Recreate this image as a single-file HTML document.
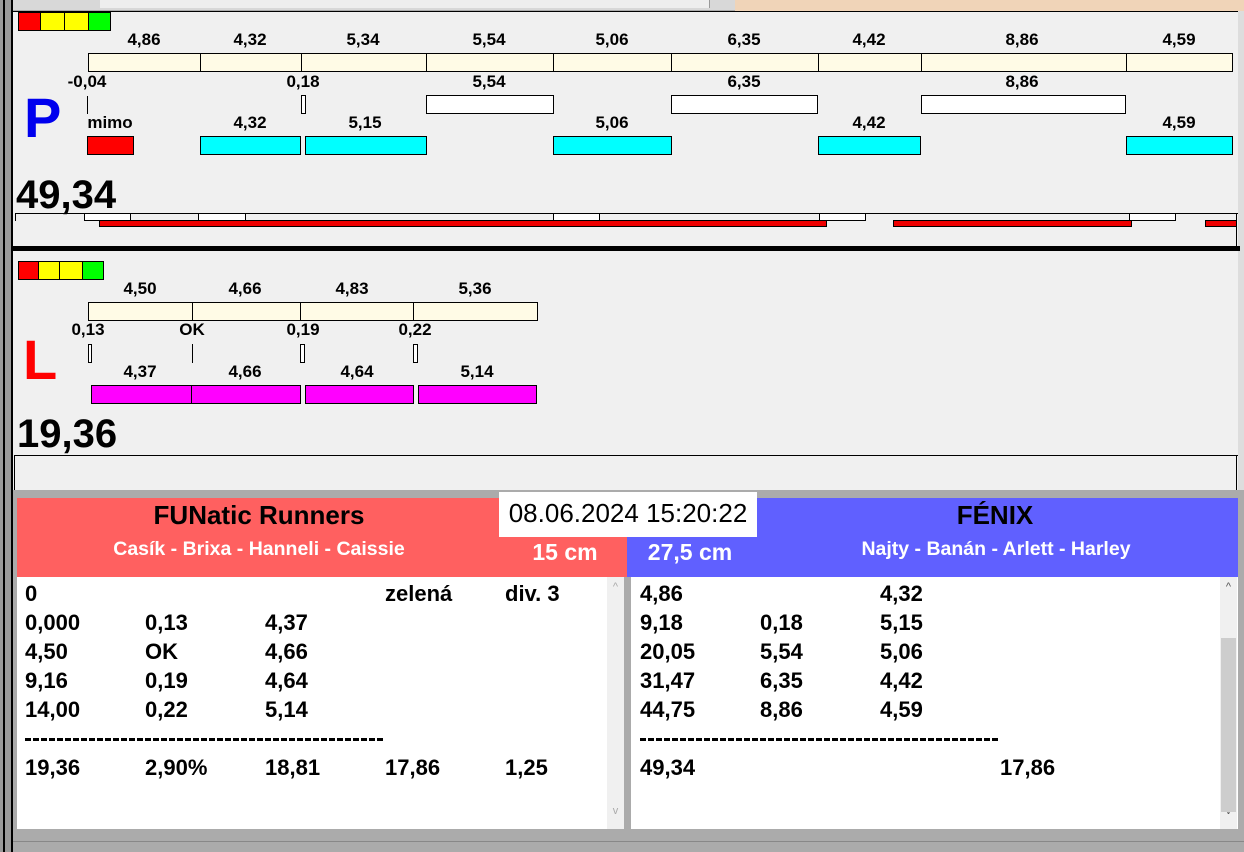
<!DOCTYPE html>
<html><head><meta charset="utf-8"><style>
*{margin:0;padding:0;box-sizing:border-box}
body{width:1244px;height:852px;position:relative;overflow:hidden;background:#ababab;font-family:"Liberation Sans",Arial,sans-serif}
.a{position:absolute}
.b{position:absolute;border:1px solid #000}
.t{position:absolute;font-weight:bold;font-size:16px;color:#000;transform:translateX(-50%);white-space:nowrap;line-height:16px}
.cr{background:#fffbe6}
.cy{background:#00ffff}
.mg{background:#ff00ff}
.w{background:#fff}
.row{position:absolute;font-weight:bold;font-size:22px;line-height:24px;white-space:nowrap}
</style></head><body>
<div class="a" style="left:0;top:0;width:1244px;height:10px;background:#d8d8d8"></div>
<div class="a" style="left:100px;top:0;width:610px;height:8px;background:#eee;border-right:1px solid #999"></div>
<div class="a" style="left:735px;top:0;width:509px;height:11px;background:#f0d4b8"></div>
<div class="a" style="left:0;top:0;width:13px;height:852px;background:#9a9a9a"></div>
<div class="a" style="left:3px;top:0;width:2px;height:852px;background:#000"></div>
<div class="a" style="left:11px;top:0;width:2px;height:852px;background:#000"></div>
<div class="a" style="left:13px;top:11px;width:1227px;height:479px;background:#f0f0f0;border-top:1px solid #000"></div>
<div class="a" style="left:1238px;top:11px;width:6px;height:479px;background:#ddd"></div>
<div class="a" style="left:13px;top:246px;width:1227px;height:5px;background:#000"></div>

<div class="b" style="left:18px;top:12px;width:23px;height:19px;background:#f00"></div>
<div class="b" style="left:40px;top:12px;width:25px;height:19px;background:#ff0"></div>
<div class="b" style="left:64px;top:12px;width:25px;height:19px;background:#ff0"></div>
<div class="b" style="left:88px;top:12px;width:23px;height:19px;background:#0f0"></div>

<div class="t" style="left:144px;top:32px;font-size:17px">4,86</div>
<div class="t" style="left:250px;top:32px;font-size:17px">4,32</div>
<div class="t" style="left:363px;top:32px;font-size:17px">5,34</div>
<div class="t" style="left:489px;top:32px;font-size:17px">5,54</div>
<div class="t" style="left:612px;top:32px;font-size:17px">5,06</div>
<div class="t" style="left:744px;top:32px;font-size:17px">6,35</div>
<div class="t" style="left:869px;top:32px;font-size:17px">4,42</div>
<div class="t" style="left:1022px;top:32px;font-size:17px">8,86</div>
<div class="t" style="left:1179px;top:32px;font-size:17px">4,59</div>
<div class="b cr" style="left:88px;top:53px;width:113px;height:19px"></div>
<div class="b cr" style="left:200px;top:53px;width:102px;height:19px"></div>
<div class="b cr" style="left:301px;top:53px;width:126px;height:19px"></div>
<div class="b cr" style="left:426px;top:53px;width:128px;height:19px"></div>
<div class="b cr" style="left:553px;top:53px;width:119px;height:19px"></div>
<div class="b cr" style="left:671px;top:53px;width:148px;height:19px"></div>
<div class="b cr" style="left:818px;top:53px;width:104px;height:19px"></div>
<div class="b cr" style="left:921px;top:53px;width:206px;height:19px"></div>
<div class="b cr" style="left:1126px;top:53px;width:107px;height:19px"></div>

<div class="t" style="left:87px;top:74px;font-size:17px">-0,04</div>
<div class="t" style="left:303px;top:74px;font-size:17px">0,18</div>
<div class="t" style="left:489px;top:74px;font-size:17px">5,54</div>
<div class="t" style="left:744px;top:74px;font-size:17px">6,35</div>
<div class="t" style="left:1022px;top:74px;font-size:17px">8,86</div>
<div class="a" style="left:87px;top:96px;width:1px;height:18px;background:#000"></div>
<div class="b w" style="left:301px;top:95px;width:5px;height:19px"></div>
<div class="b w" style="left:426px;top:95px;width:128px;height:19px"></div>
<div class="b w" style="left:671px;top:95px;width:147px;height:19px"></div>
<div class="b w" style="left:921px;top:95px;width:205px;height:19px"></div>

<div class="a" style="left:24px;top:88px;font-size:56px;font-weight:bold;color:#0000ee;line-height:60px">P</div>
<div class="t" style="left:110px;top:115px;font-size:17px">mimo</div>
<div class="t" style="left:250px;top:115px;font-size:17px">4,32</div>
<div class="t" style="left:365px;top:115px;font-size:17px">5,15</div>
<div class="t" style="left:612px;top:115px;font-size:17px">5,06</div>
<div class="t" style="left:869px;top:115px;font-size:17px">4,42</div>
<div class="t" style="left:1179px;top:115px;font-size:17px">4,59</div>
<div class="b" style="left:87px;top:136px;width:47px;height:19px;background:#f00"></div>
<div class="b cy" style="left:200px;top:136px;width:101px;height:19px"></div>
<div class="b cy" style="left:305px;top:136px;width:122px;height:19px"></div>
<div class="b cy" style="left:553px;top:136px;width:119px;height:19px"></div>
<div class="b cy" style="left:818px;top:136px;width:103px;height:19px"></div>
<div class="b cy" style="left:1126px;top:136px;width:107px;height:19px"></div>

<div class="a" style="left:16px;top:175px;font-size:40px;font-weight:bold;line-height:40px">49,34</div>
<div class="a" style="left:15px;top:213px;width:1223px;height:1px;background:#000"></div>
<div class="a" style="left:15px;top:213px;width:1px;height:8px;background:#000"></div>
<div class="a" style="left:1236px;top:213px;width:1px;height:33px;background:#000"></div>
<div class="b w" style="left:84px;top:213px;width:47px;height:8px"></div>
<div class="b w" style="left:198px;top:213px;width:48px;height:8px"></div>
<div class="b w" style="left:553px;top:213px;width:47px;height:8px"></div>
<div class="b w" style="left:819px;top:213px;width:47px;height:8px"></div>
<div class="b w" style="left:1129px;top:213px;width:47px;height:8px"></div>
<div class="b" style="left:99px;top:220px;width:728px;height:7px;background:#e00"></div>
<div class="b" style="left:893px;top:220px;width:239px;height:7px;background:#e00"></div>
<div class="b" style="left:1205px;top:220px;width:32px;height:7px;background:#e00"></div>

<div class="b" style="left:18px;top:261px;width:21px;height:19px;background:#f00"></div>
<div class="b" style="left:38px;top:261px;width:22px;height:19px;background:#ff0"></div>
<div class="b" style="left:59px;top:261px;width:24px;height:19px;background:#ff0"></div>
<div class="b" style="left:82px;top:261px;width:22px;height:19px;background:#0f0"></div>
<div class="t" style="left:140px;top:281px;font-size:17px">4,50</div>
<div class="t" style="left:245px;top:281px;font-size:17px">4,66</div>
<div class="t" style="left:352px;top:281px;font-size:17px">4,83</div>
<div class="t" style="left:475px;top:281px;font-size:17px">5,36</div>
<div class="b cr" style="left:88px;top:302px;width:105px;height:19px"></div>
<div class="b cr" style="left:192px;top:302px;width:109px;height:19px"></div>
<div class="b cr" style="left:300px;top:302px;width:114px;height:19px"></div>
<div class="b cr" style="left:413px;top:302px;width:125px;height:19px"></div>
<div class="t" style="left:88px;top:322px;font-size:17px">0,13</div>
<div class="t" style="left:192px;top:322px;font-size:17px">OK</div>
<div class="t" style="left:303px;top:322px;font-size:17px">0,19</div>
<div class="t" style="left:415px;top:322px;font-size:17px">0,22</div>
<div class="b w" style="left:88px;top:344px;width:4px;height:19px"></div>
<div class="a" style="left:192px;top:344px;width:1px;height:19px;background:#000"></div>
<div class="b w" style="left:300px;top:344px;width:5px;height:19px"></div>
<div class="b w" style="left:413px;top:344px;width:5px;height:19px"></div>
<div class="a" style="left:23px;top:330px;font-size:56px;font-weight:bold;color:#f00;line-height:60px">L</div>
<div class="t" style="left:140px;top:364px;font-size:17px">4,37</div>
<div class="t" style="left:245px;top:364px;font-size:17px">4,66</div>
<div class="t" style="left:357px;top:364px;font-size:17px">4,64</div>
<div class="t" style="left:477px;top:364px;font-size:17px">5,14</div>
<div class="b mg" style="left:91px;top:385px;width:101px;height:19px"></div>
<div class="b mg" style="left:191px;top:385px;width:110px;height:19px"></div>
<div class="b mg" style="left:305px;top:385px;width:109px;height:19px"></div>
<div class="b mg" style="left:418px;top:385px;width:119px;height:19px"></div>
<div class="a" style="left:17px;top:414px;font-size:40px;font-weight:bold;line-height:40px">19,36</div>
<div class="a" style="left:14px;top:455px;width:1224px;height:1px;background:#000"></div>
<div class="a" style="left:14px;top:455px;width:1px;height:35px;background:#000"></div>
<div class="a" style="left:1236px;top:455px;width:1px;height:35px;background:#000"></div>

<div class="a" style="left:17px;top:498px;width:610px;height:79px;background:#ff6060"></div>
<div class="a" style="left:627px;top:498px;width:611px;height:79px;background:#6060ff"></div>
<div class="a" style="left:499px;top:492px;width:258px;height:45px;background:#fff;font-size:26px;line-height:38px;padding-top:2px;text-align:center">08.06.2024 15:20:22</div>
<div class="t" style="left:259px;top:502px;font-size:26px;line-height:26px">FUNatic Runners</div>
<div class="t" style="left:259px;top:539px;font-size:19.5px;line-height:20px;color:#fff">Casík - Brixa - Hanneli - Caissie</div>
<div class="t" style="left:565px;top:540px;font-size:23px;line-height:24px;color:#fff">15 cm</div>
<div class="t" style="left:690px;top:540px;font-size:23px;line-height:24px;color:#fff">27,5 cm</div>
<div class="t" style="left:995px;top:502px;font-size:26px;line-height:26px">FÉNIX</div>
<div class="t" style="left:996px;top:539px;font-size:19.5px;line-height:20px;color:#fff">Najty - Banán - Arlett - Harley</div>

<div class="a" style="left:17px;top:577px;width:607px;height:252px;background:#fff"></div>
<div class="a" style="left:607px;top:577px;width:17px;height:252px;background:#f0f0f0;color:#aaa;font-size:11px;text-align:center"><div style="margin-top:4px">^</div><div style="margin-top:212px">v</div></div>
<div class="a" style="left:631px;top:577px;width:607px;height:252px;background:#fff"></div>
<div class="a" style="left:1220px;top:577px;width:17px;height:252px;background:#f0f0f0;color:#555;font-size:11px;text-align:center"><div style="margin-top:4px">^</div><div style="margin-top:212px">v</div></div>
<div class="a" style="left:1221px;top:638px;width:15px;height:174px;background:#cdcdcd"></div>

<div class="row" style="left:25px;top:582px">0</div>
<div class="row" style="left:385px;top:582px">zelená</div>
<div class="row" style="left:505px;top:582px">div. 3</div>
<div class="row" style="left:25px;top:611px">0,000</div><div class="row" style="left:145px;top:611px">0,13</div><div class="row" style="left:265px;top:611px">4,37</div>
<div class="row" style="left:25px;top:640px">4,50</div><div class="row" style="left:145px;top:640px">OK</div><div class="row" style="left:265px;top:640px">4,66</div>
<div class="row" style="left:25px;top:669px">9,16</div><div class="row" style="left:145px;top:669px">0,19</div><div class="row" style="left:265px;top:669px">4,64</div>
<div class="row" style="left:25px;top:698px">14,00</div><div class="row" style="left:145px;top:698px">0,22</div><div class="row" style="left:265px;top:698px">5,14</div>
<div class="a" style="left:25px;top:738px;width:360px;height:3px;background:repeating-linear-gradient(90deg,#000 0 6px,transparent 6px 8px)"></div>
<div class="row" style="left:25px;top:756px">19,36</div><div class="row" style="left:145px;top:756px">2,90%</div><div class="row" style="left:265px;top:756px">18,81</div><div class="row" style="left:385px;top:756px">17,86</div><div class="row" style="left:505px;top:756px">1,25</div>

<div class="row" style="left:640px;top:582px">4,86</div><div class="row" style="left:880px;top:582px">4,32</div>
<div class="row" style="left:640px;top:611px">9,18</div><div class="row" style="left:760px;top:611px">0,18</div><div class="row" style="left:880px;top:611px">5,15</div>
<div class="row" style="left:640px;top:640px">20,05</div><div class="row" style="left:760px;top:640px">5,54</div><div class="row" style="left:880px;top:640px">5,06</div>
<div class="row" style="left:640px;top:669px">31,47</div><div class="row" style="left:760px;top:669px">6,35</div><div class="row" style="left:880px;top:669px">4,42</div>
<div class="row" style="left:640px;top:698px">44,75</div><div class="row" style="left:760px;top:698px">8,86</div><div class="row" style="left:880px;top:698px">4,59</div>
<div class="a" style="left:640px;top:738px;width:360px;height:3px;background:repeating-linear-gradient(90deg,#000 0 6px,transparent 6px 8px)"></div>
<div class="row" style="left:640px;top:756px">49,34</div><div class="row" style="left:1000px;top:756px">17,86</div>

<div class="a" style="left:13px;top:841px;width:1231px;height:1px;background:#888"></div>
</body></html>
